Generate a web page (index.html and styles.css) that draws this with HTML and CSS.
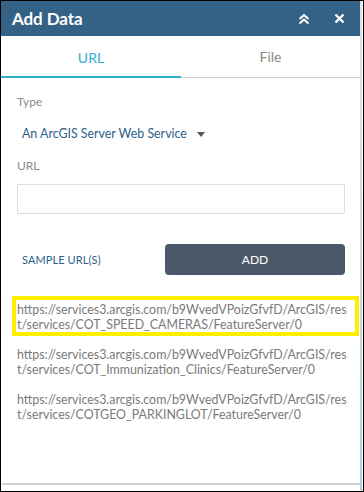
FILE: index.html
```html
<!DOCTYPE html>
<html>
<head>
<meta charset="utf-8">
<link rel="stylesheet" href="styles.css">
</head>
<body>
<div class="frame">
  <div class="panel">
    <div class="header">
      <span class="title">Add Data</span>
      <div class="actions">
        <svg class="ico" width="12" height="12" viewBox="0 0 12 12"><path d="M1.5 6 L6 2 L10.5 6 M1.5 10.5 L6 6.5 L10.5 10.5" fill="none" stroke="#fff" stroke-width="2"/></svg>
        <svg class="ico" width="11" height="11" viewBox="0 0 11 11"><path d="M1.5 1.5 L9.5 9.5 M9.5 1.5 L1.5 9.5" fill="none" stroke="#fff" stroke-width="2.4"/></svg>
      </div>
    </div>
    <div class="tabs">
      <div class="tab active">URL</div>
      <div class="tab">File</div>
    </div>
    <div class="content">
      <div class="label">Type</div>
      <div class="select">An ArcGIS Server Web Service <span class="caret"></span></div>
      <div class="label url-label">URL</div>
      <div class="input"></div>
      <div class="row">
        <span class="sample">SAMPLE URL(S)</span>
        <button class="add">ADD</button>
      </div>
    </div>
    <div class="samples">
      <div class="item highlight">https://services3.arcgis.com/b9WvedVPoizGfvfD/ArcGIS/rest/services/COT_SPEED_CAMERAS/FeatureServer/0</div>
      <div class="item">https://services3.arcgis.com/b9WvedVPoizGfvfD/ArcGIS/rest/services/COT_Immunization_Clinics/FeatureServer/0</div>
      <div class="item">https://services3.arcgis.com/b9WvedVPoizGfvfD/ArcGIS/rest/services/COTGEO_PARKINGLOT/FeatureServer/0</div>
    </div>
    <div class="spacer"></div>
    <div class="footer-line"></div>
  </div>
  <div class="strip"></div>
</div>
</body>
</html>
```
FILE: styles.css
```css
* { box-sizing: border-box; }
html, body { margin: 0; padding: 0; background: #fff; }
body { font-family: Lato, "Open Sans", sans-serif; }
.frame {
  width: 364px; height: 492px;
  border: 1px solid #000;
  display: flex;
  background: #fff;
}
.panel {
  width: 359px;
  display: flex; flex-direction: column;
}
.strip {
  width: 2px;
  background: linear-gradient(#dfe3e6, #b6cfe0);
}
.header {
  height: 35px;
  background: #346286;
  display: flex; align-items: center; justify-content: space-between;
  padding: 0 15px 0 11px;
}
.title { color: #fff; font-weight: 700; font-size: 17px; letter-spacing: -0.1px; }
.actions { display: flex; align-items: center; gap: 24px; }
.ico { display: block; }
.tabs {
  display: flex; height: 42px;
  border-bottom: 1px solid #cfcfcf;
}
.tab {
  flex: 1; display: flex; align-items: center; justify-content: center;
  font-size: 14px; color: #8a8a8a;
}
.tab:first-child { flex: 0 0 180px; }
.tab.active {
  color: #2bb0cf;
  box-shadow: inset 0 -2px 0 #2bb0cf;
  margin-bottom: -1px;
}
.content { padding: 17px 15px 0 16px; }
.label { font-size: 12px; color: #8b8b8b; line-height: 14px; }
.select {
  margin-top: 17px; margin-left: 5px;
  font-size: 12.4px; color: #2c5f8a; line-height: 16px;
  display: flex; align-items: center;
}
.caret {
  display: inline-block; width: 0; height: 0;
  border-left: 4.5px solid transparent; border-right: 4.5px solid transparent;
  border-top: 5px solid #555;
  margin-left: 10px;
}
.url-label { margin-top: 17px; }
.input {
  margin-top: 11px;
  height: 30px; width: 328px;
  border: 1px solid #ddd; border-radius: 1px;
}
.row {
  margin-top: 30px;
  display: flex; align-items: center; justify-content: space-between;
  width: 328px;
}
.sample { margin-left: 5px; font-size: 11px; color: #2c5f8a; letter-spacing: 0.1px; }
.add {
  width: 180px; height: 31px;
  background: #4b5869; border: none; border-radius: 4px;
  color: #fff; font-family: inherit; font-size: 12px;
}
.samples { padding: 21px 0 0 11px; display: flex; flex-direction: column; gap: 5px; }
.item {
  font-size: 12.4px; color: #7a7a7a; line-height: 15px;
  word-break: break-all;
  padding: 2px 6px 0 1px;
  border: 4px solid transparent;
  width: 347px;
}
.item.highlight { border-color: #ffee00; }
.spacer { flex: 1; }
.footer-line { height: 2px; background: #d0d0d0; margin: 0 0 6px 1px; }
```
